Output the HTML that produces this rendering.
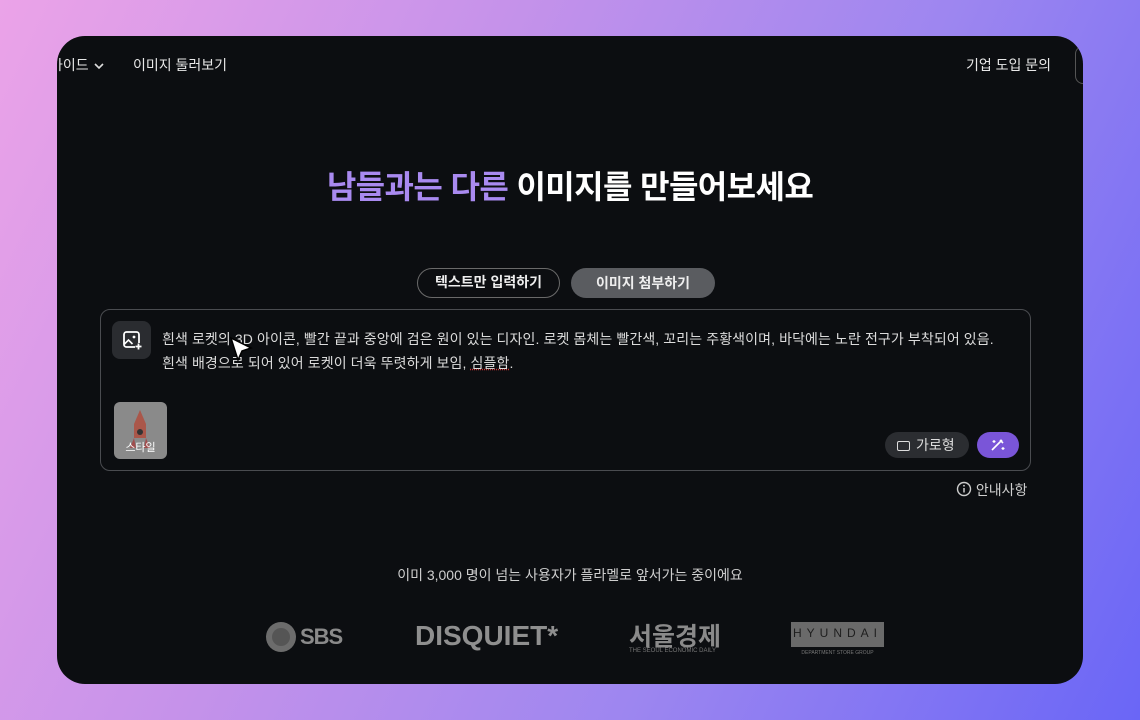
<!DOCTYPE html>
<html><head><meta charset="utf-8"><style>
*{margin:0;padding:0;box-sizing:border-box}
body{width:1140px;height:720px;overflow:hidden;background:linear-gradient(115deg,#eba3e8 0%,#c592ea 35%,#9d86f0 65%,#6a66f6 100%);font-family:"Liberation Sans","Noto Sans CJK KR",sans-serif;position:relative}
.card{position:absolute;left:57px;top:36px;width:1026px;height:648px;background:#0c0e11;border-radius:28px;overflow:hidden;color:#e6e6e6}
.t{position:absolute;white-space:nowrap}
</style></head><body>
<div class="card">
<div class="t" style="left:-7px;top:19px;font-size:14px;color:#e8e8e8">가이드 <svg width="12" height="10" viewBox="0 0 12 10" style="vertical-align:middle"><path d="M2 3l4 4 4-4" stroke="#ddd" stroke-width="1.6" fill="none"/></svg></div>
<div class="t" style="left:76px;top:19px;font-size:14px;color:#e8e8e8">이미지 둘러보기</div>
<div class="t" style="left:909px;top:19px;font-size:14px;color:#e8e8e8">기업 도입 문의</div>
<div style="position:absolute;left:1018px;top:10px;width:30px;height:38px;border:1.5px solid #555;border-radius:8px"></div>
<div class="t" style="left:0;width:1026px;text-align:center;top:126px;font-size:32px;font-weight:bold;color:#fff;letter-spacing:-0.6px"><span style="color:#a98af0">남들과는 다른</span> 이미지를 만들어보세요</div>
<div class="t" style="left:360px;top:232px;width:143px;height:30px;border:1.5px solid #6a6a6a;border-radius:15px;text-align:center;line-height:27px;font-size:14px;font-weight:bold;color:#eee">텍스트만 입력하기</div>
<div class="t" style="left:514px;top:232px;width:144px;height:30px;background:#5a5c60;border-radius:15px;text-align:center;line-height:30px;font-size:14px;font-weight:bold;color:#eee">이미지 첨부하기</div>
<div style="position:absolute;left:43px;top:273px;width:931px;height:162px;border:1.5px solid #4a4c50;border-radius:10px"></div>
<div style="position:absolute;left:55px;top:285px;width:39px;height:38px;background:#2a2c30;border-radius:8px"><svg width="39" height="38" viewBox="0 0 39 38"><rect x="12" y="11" width="15" height="15" rx="2.5" stroke="#fff" stroke-width="1.8" fill="none"/><path d="M12.5 23l4-4 4 4" stroke="#fff" stroke-width="1.6" fill="none"/><circle cx="22" cy="16" r="1.4" fill="#fff"/><rect x="23" y="22" width="7" height="7" fill="#2a2c30"/><path d="M26.5 22.5v6M23.5 25.5h6" stroke="#fff" stroke-width="1.8"/></svg></div>
<div class="t" style="left:105px;top:291px;font-size:14px;line-height:24px;color:#dcdcdc;letter-spacing:0.1px">흰색 로켓의 3D 아이콘, 빨간 끝과 중앙에 검은 원이 있는 디자인. 로켓 몸체는 빨간색, 꼬리는 주황색이며, 바닥에는 노란 전구가 부착되어 있음.<br>흰색 배경으로 되어 있어 로켓이 더욱 뚜렷하게 보임, <span style="text-decoration:underline dotted #c33">심플함</span>.</div>
<svg style="position:absolute;left:172px;top:300px" width="26" height="28" viewBox="0 0 26 28"><path d="M2 2l20 10-9 3-4 9z" fill="#fff" stroke="#000" stroke-width="1.5"/></svg>
<div style="position:absolute;left:57px;top:366px;width:53px;height:57px;background:#8a8a8a;border-radius:6px;overflow:hidden"><svg width="53" height="57"><path d="M26 8l6 14v14h-12V22z" fill="#b24a3a" opacity=".8"/><circle cx="26" cy="30" r="3" fill="#333"/><path d="M20 36l-4 10h6zM32 36l4 10h-6z" fill="#a33" opacity=".7"/></svg><div class="t" style="left:0;width:53px;text-align:center;top:37px;font-size:11px;color:#fff">스타일</div></div>
<div class="t" style="left:828px;top:396px;width:84px;height:26px;background:#2b2d31;border-radius:13px;font-size:14px;line-height:26px;color:#ddd;padding-left:12px"><span style="display:inline-block;width:13px;height:10px;border:1.6px solid #ddd;border-radius:2px;vertical-align:-1px;margin-right:6px"></span>가로형</div>
<div style="position:absolute;left:920px;top:396px;width:42px;height:26px;background:#7a55d8;border-radius:13px"><svg width="42" height="26" viewBox="0 0 42 26"><path d="M15 18l10-10M23 8l3 3" stroke="#fff" stroke-width="1.6"/><path d="M17 8v3M15.5 9.5h3M26 15v3M24.5 16.5h3" stroke="#fff" stroke-width="1.2"/></svg></div>
<div class="t" style="left:899px;top:444px;font-size:14px;color:#cfcfcf"><svg width="16" height="16" viewBox="0 0 16 16" style="vertical-align:-2px"><circle cx="8" cy="8" r="6.5" stroke="#ccc" stroke-width="1.4" fill="none"/><path d="M8 7v4.5" stroke="#ccc" stroke-width="1.5"/><circle cx="8" cy="4.8" r=".9" fill="#ccc"/></svg> 안내사항</div>
<div class="t" style="left:0;width:1026px;text-align:center;top:529px;font-size:14px;color:#cfcfcf">이미 3,000 명이 넘는 사용자가 플라멜로 앞서가는 중이에요</div>
<svg style="position:absolute;left:209px;top:584px" width="30" height="34"><circle cx="15" cy="17" r="15" fill="#6c6c6c"/><circle cx="15" cy="17" r="9" fill="#555"/></svg>
<div class="t" style="left:243px;top:588px;font-size:22px;font-weight:bold;color:#8a8a8a;letter-spacing:-1px">SBS</div>
<div class="t" style="left:358px;top:584px;font-size:28px;font-weight:bold;color:#8f8f8f">DISQUIET*</div>
<div class="t" style="left:572px;top:581px;font-size:25px;font-weight:bold;color:#8a8a8a">서울경제</div>
<div class="t" style="left:572px;top:612px;font-size:6px;color:#777">THE SEOUL ECONOMIC DAILY</div>
<div style="position:absolute;left:734px;top:586px;width:93px;height:25px;background:#6a6a6a"></div>
<div class="t" style="left:734px;top:590px;width:93px;text-align:center;font-size:12px;letter-spacing:5px;color:#1e1e1e">HYUNDAI</div>
<div class="t" style="left:734px;top:614px;width:93px;text-align:center;font-size:5px;color:#777">DEPARTMENT STORE GROUP</div>
</div>
</body></html>
